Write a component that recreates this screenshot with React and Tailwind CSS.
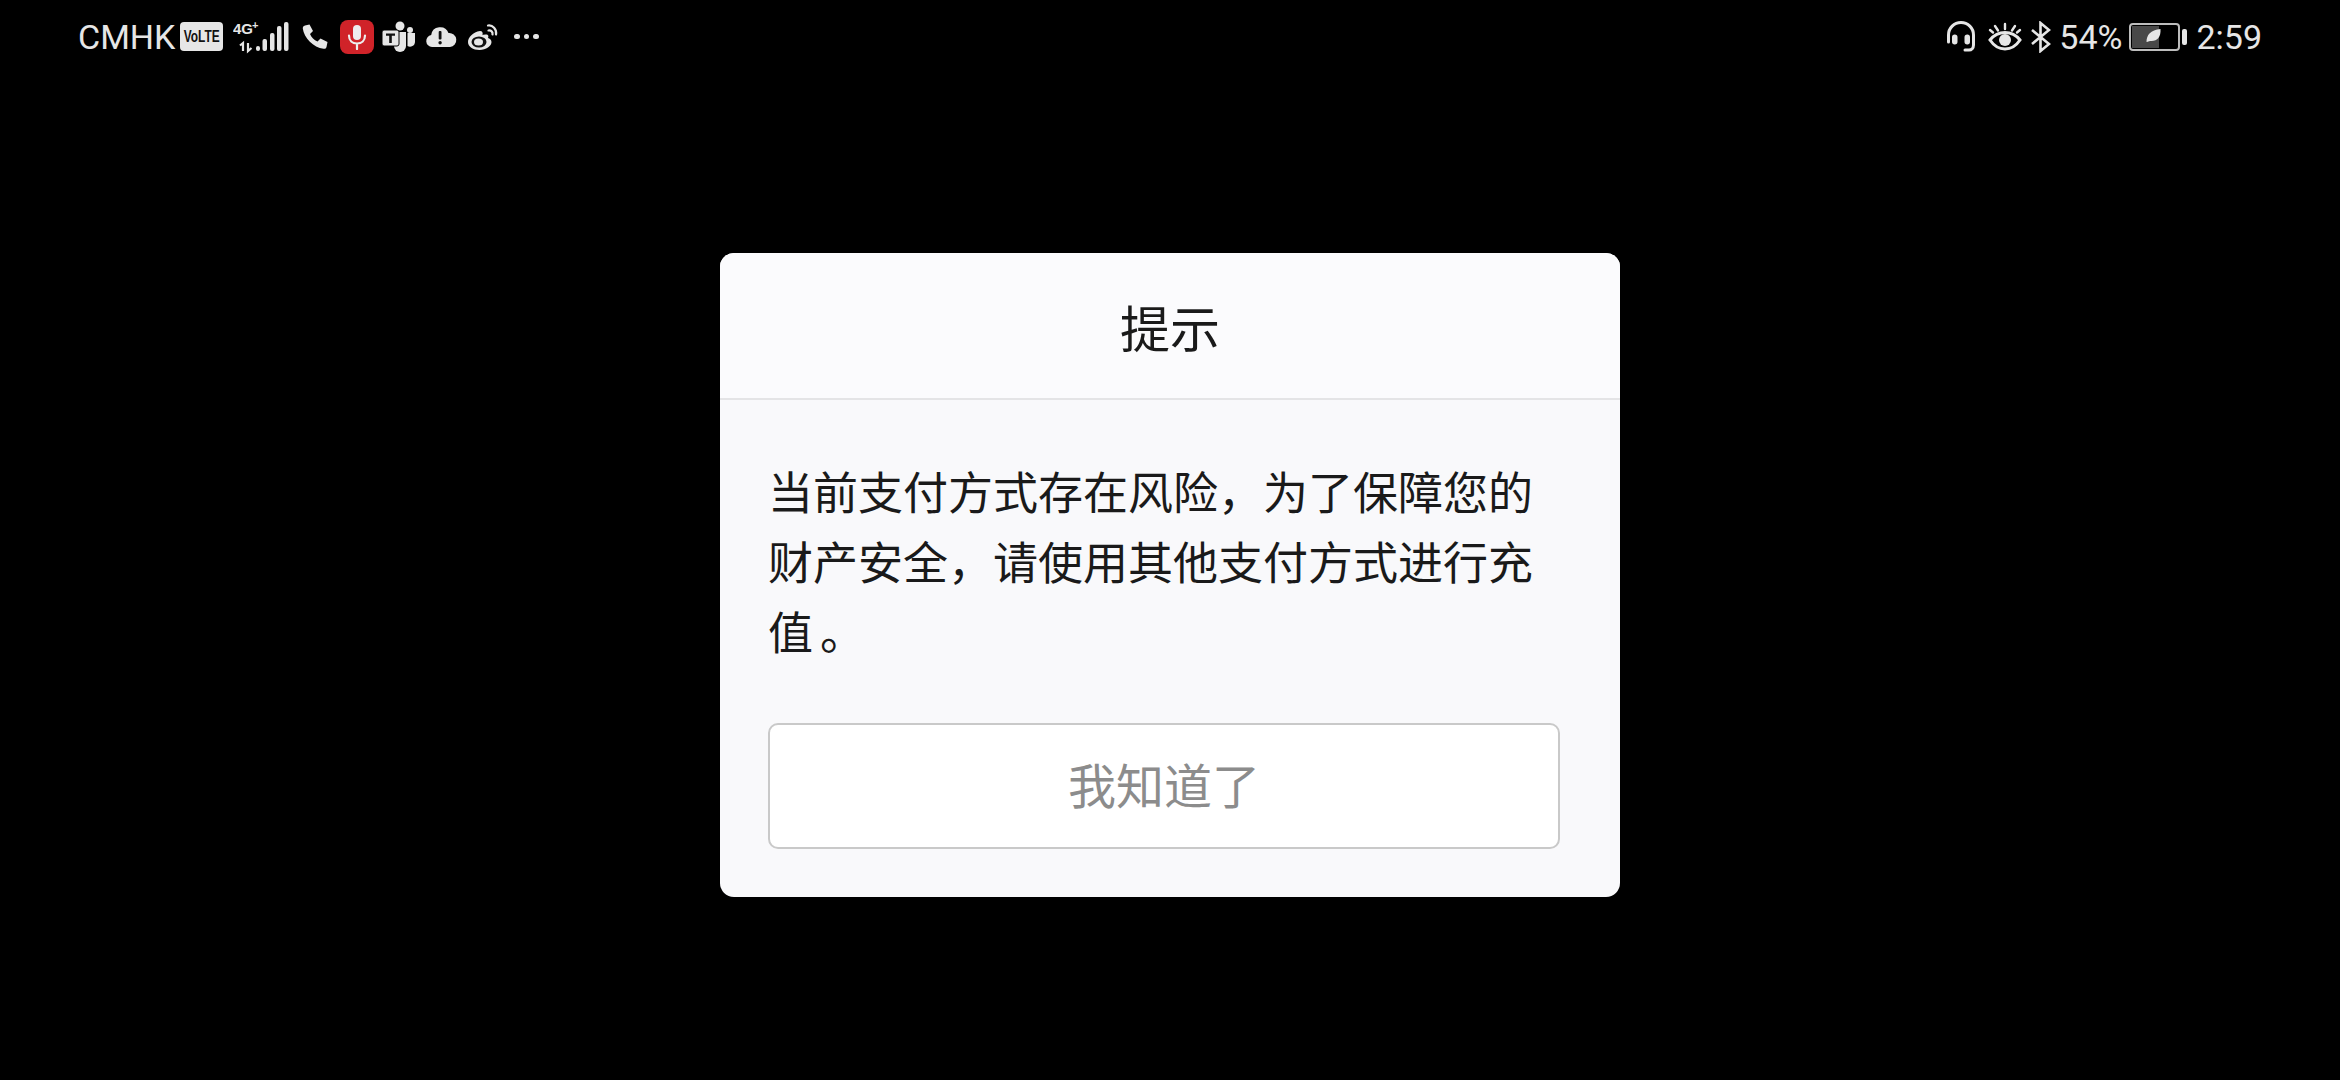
const cjk = "font-['Roboto','Noto_Sans_CJK_SC',sans-serif]";

function VolteBadge() {
  return (
    <div className="flex h-[29px] w-[43px] items-center justify-center rounded-[4px] bg-[#e6e6e6]">
      <span className="scale-x-[0.7] font-['Liberation_Sans',sans-serif] text-[17px] leading-none font-bold text-[#111]">
        VoLTE
      </span>
    </div>
  );
}

function SignalIcon() {
  return (
    <svg width="56" height="34" viewBox="0 0 56 34" fill="#e6e6e6">
      <rect x="23" y="26" width="4" height="5" rx="2" />
      <rect x="29.500" y="19" width="4.500" height="12" rx="2" />
      <rect x="37" y="13" width="4.500" height="18" rx="2" />
      <rect x="44" y="6" width="4.500" height="25" rx="2" />
      <rect x="51" y="2" width="4.500" height="29" rx="2" />
      <path d="M10 31V23l-3 2.500M15 23v8l3.500-3" stroke="#e6e6e6" strokeWidth="2.200" fill="none" />
      <text x="0" y="14" fontFamily="Liberation Sans" fontSize="15" fontWeight="700">
        4G
      </text>
      <text x="19" y="9" fontFamily="Liberation Sans" fontSize="11" fontWeight="700">
        +
      </text>
    </svg>
  );
}

function PhoneIcon() {
  return (
    <svg width="28" height="28" viewBox="0 0 28 28" fill="#e6e6e6">
      <path d="M4 2.500 8.500 1.500 12 8l-3 3c1.500 3.500 4 6 7.500 7.500l3-3 7 3.500-1 5c-.3 1.500-1.500 2-3 1.800C12.500 24.500 3 15 1.800 5.500 1.700 4 2.500 2.900 4 2.500Z" />
    </svg>
  );
}

function MicBadge() {
  return (
    <div className="flex h-[34px] w-[34px] items-center justify-center rounded-[8px] bg-[#d02329]">
      <svg width="20" height="26" viewBox="0 0 20 26" fill="none" stroke="#eee" strokeWidth="2.200" strokeLinecap="round">
        <rect x="6" y="1" width="8" height="15" rx="4" fill="#eee" stroke="none" />
        <path d="M2 11.500c0 5 3.500 8 8 8s8-3 8-8M10 19.500V25" />
      </svg>
    </div>
  );
}

function TeamsIcon() {
  return (
    <svg width="34" height="32" viewBox="0 0 34 32" fill="#e6e6e6">
      <circle cx="18" cy="5" r="4.500" />
      <circle cx="28" cy="9" r="3" />
      <path d="M12 11h12v14a6 6 0 0 1-12 0Z" />
      <path d="M25.500 12H33v9a5 5 0 0 1-7.500 4Z" />
      <rect x="0" y="9" width="17" height="16" rx="2" stroke="#000" strokeWidth="1" />
      <path d="M4 12.500h9v2.200H9.800V22H7.200v-7.300H4Z" fill="#111" />
    </svg>
  );
}

function CloudAlertIcon() {
  return (
    <svg width="32" height="22" viewBox="0 0 32 22">
      <path d="M7 21a6 6 0 0 1-.8-11.900A9 9 0 0 1 23.500 7 7 7 0 0 1 25 21Z" fill="#e6e6e6" />
      <rect x="13.700" y="5" width="2.800" height="8.500" rx="1" fill="#111" />
      <circle cx="15.100" cy="16.700" r="1.700" fill="#111" />
    </svg>
  );
}

function WeiboIcon() {
  return (
    <svg width="32" height="28" viewBox="0 0 32 28" fill="none">
      <path
        d="M13 8C6 9 1 14.500 1 19c0 4.500 5 8 11.500 8S24.500 23 24.500 19c0-2.500-2-3.500-3.500-4 .8-2 .5-4-3-3.500-1.500.2-2 .5-2.500.7C16 10 15.500 8 13 8Z"
        fill="#e6e6e6"
      />
      <ellipse cx="12" cy="19" rx="7.500" ry="5.500" fill="#111" />
      <ellipse cx="11.500" cy="19" rx="4.500" ry="3.500" fill="#e6e6e6" />
      <path d="M21 2.500c4.500-.8 9 3.500 8 9M21.500 7.500c2.500-.5 4.500 1.500 4 4" stroke="#e6e6e6" strokeWidth="2.200" strokeLinecap="round" />
    </svg>
  );
}

function HeadsetIcon() {
  return (
    <svg width="30" height="33" viewBox="0 0 30 33" fill="none" stroke="#e6e6e6" strokeWidth="3" strokeLinecap="round">
      <path d="M2.500 22V15a12.500 12.500 0 0 1 25 0v10c0 3-2 5-4.500 5h-4" />
      <rect x="7.500" y="16" width="2.500" height="7" rx="1.200" fill="#e6e6e6" />
      <rect x="20" y="16" width="2.500" height="7" rx="1.200" fill="#e6e6e6" />
    </svg>
  );
}

function EyeIcon() {
  return (
    <svg width="34" height="30" viewBox="0 0 34 30" fill="none" stroke="#e6e6e6" strokeWidth="3" strokeLinecap="round">
      <path d="M2 18c8-10 22-10 30 0-8 12-22 12-30 0Z" />
      <circle cx="17" cy="18" r="6" fill="#e6e6e6" stroke="none" />
      <path d="M17 2v5M7 4l3 4.500M27 4l-3 4.500M2 8l3 2.500M32 8l-3 2.500" strokeWidth="2.400" />
    </svg>
  );
}

function BluetoothIcon() {
  return (
    <svg width="20" height="32" viewBox="0 0 20 32" fill="none" stroke="#e6e6e6" strokeWidth="2.600">
      <path d="M1 9l17 14-8.500 7V2L18 9 1 23" />
    </svg>
  );
}

function BatteryIcon() {
  return (
    <div className="flex items-center gap-[2px]">
      <div className="relative flex h-[28px] w-[51px] rounded-[4px] border-2 border-[#bdbdbd] p-[1px]">
        <div className="h-full w-[27px] bg-[#484848]" />
        <svg className="absolute top-[3px] left-[14px]" width="17" height="16" viewBox="0 0 16 16" fill="#e6e6e6">
          <path d="M1 14C1 7 5 2 15 1c.5 8-3 12-9 12-2 0-3 .5-5 1Z" />
        </svg>
      </div>
      <div className="h-[16px] w-[5px] rounded-[2px] bg-[#e6e6e6]" />
    </div>
  );
}

function StatusBar() {
  return (
    <div className="flex h-[72px] items-center justify-between px-[78px] pt-[1px] text-[#e6e6e6]">
      <div className="flex items-center">
        <span className="text-[34px] leading-none">CMHK</span>
        <div className="ml-[5px]"><VolteBadge /></div>
        <div className="ml-[10px]"><SignalIcon /></div>
        <div className="ml-[12px]"><PhoneIcon /></div>
        <div className="ml-[11px]"><MicBadge /></div>
        <div className="ml-[8px]"><TeamsIcon /></div>
        <div className="ml-[9px]"><CloudAlertIcon /></div>
        <div className="ml-[10px]"><WeiboIcon /></div>
        <div className="ml-[15px] flex gap-[4px]">
          <div className="h-[5.500px] w-[5.500px] rounded-full bg-[#e6e6e6]" />
          <div className="h-[5.500px] w-[5.500px] rounded-full bg-[#e6e6e6]" />
          <div className="h-[5.500px] w-[5.500px] rounded-full bg-[#e6e6e6]" />
        </div>
      </div>
      <div className="flex items-center">
        <HeadsetIcon />
        <div className="ml-[12px]"><EyeIcon /></div>
        <div className="ml-[9px]"><BluetoothIcon /></div>
        <span className="ml-[8px] text-[34px] leading-none">54%</span>
        <div className="ml-[7px]"><BatteryIcon /></div>
        <span className="ml-[9px] text-[34px] leading-none">2:59</span>
      </div>
    </div>
  );
}

function Dialog() {
  return (
    <div className="mx-auto mt-[181px] w-[900px] overflow-hidden rounded-[14px] bg-[#f9f9fb]">
      <div className="flex h-[147px] items-center justify-center border-b-2 border-[#e4e4e6] bg-[#fbfbfd] pt-[11px] text-[50px] leading-none text-[#1a1a1a]">
        提示
      </div>
      <div className="px-[48px] pt-[60px] pb-[48px]">
        <div className="text-[45px] leading-[70px] whitespace-nowrap text-[#1a1a1a]">
          <div>当前支付方式存在风险，为了保障您的</div>
          <div>财产安全，请使用其他支付方式进行充</div>
          <div className="flex">
            <span>值</span>
            <span className="pl-[7px]">。</span>
          </div>
        </div>
        <button className="mt-[53px] flex h-[126px] w-[792px] items-center justify-center rounded-[10px] border-2 border-[#c9c9c9] bg-white pt-[4px] text-[48px] leading-none text-[#8c8c8c]">
          我知道了
        </button>
      </div>
    </div>
  );
}

export default function App() {
  return (
    <div className={`h-[1080px] w-[2340px] overflow-hidden bg-black ${cjk}`}>
      <StatusBar />
      <Dialog />
    </div>
  );
}
